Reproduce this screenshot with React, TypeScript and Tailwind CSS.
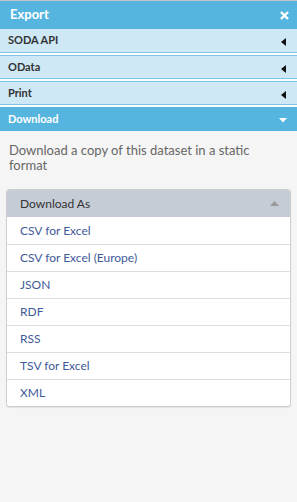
export default function App(): JSX.Element {
  const sections = ['SODA API', 'OData', 'Print'];
  const formats = ['CSV for Excel', 'CSV for Excel (Europe)', 'JSON', 'RDF', 'RSS', 'TSV for Excel', 'XML'];

  return (
    <div
      className="flex h-[502px] w-[297px] flex-col overflow-hidden border-t border-[#c4c4c4] bg-white"
      style={{ fontFamily: 'Lato, "Open Sans", sans-serif' }}
    >
      <div className="flex h-[28px] shrink-0 items-center justify-between bg-[#56b5df] pl-[10px] pr-[8px]">
        <span className="text-[13px] font-bold text-white">Export</span>
        <svg width="9" height="9" viewBox="0 0 9 9">
          <path d="M1 1 L8 8 M8 1 L1 8" stroke="white" strokeWidth="2.4" />
        </svg>
      </div>

      {sections.map((s, i) => (
        <div
          key={s}
          className={`mb-[2px] flex h-[24px] shrink-0 items-center justify-between border-b border-[#7cc3e5] bg-[#cee8f5] pl-[8px] pr-[11px] ${i > 0 ? 'border-t' : ''}`}
        >
          <span className="text-[11px] font-bold text-[#333]">{s}</span>
          <svg width="5" height="8" viewBox="0 0 5 8" className="mt-[3px]">
            <path d="M5 0 L0 4 L5 8 Z" fill="#111" />
          </svg>
        </div>
      ))}

      <div className="flex h-[24px] shrink-0 items-center justify-between bg-[#56b5df] pl-[8px] pr-[10px]">
        <span className="text-[11px] font-bold text-white">Download</span>
        <svg width="8" height="5" viewBox="0 0 8 5" className="mt-[2px]">
          <path d="M0 0 L8 0 L4 4.5 Z" fill="white" />
        </svg>
      </div>

      <div className="flex-1 bg-[#f5f5f5] px-[6px] pt-[12px]">
        <p className="px-[3px] text-[13px] leading-[15px] text-[#666]">
          Download a copy of this dataset in a static format
        </p>

        <div className="mt-[16px] overflow-hidden rounded-[3px] border border-[#cfcfcf] bg-white shadow-[0_1px_1px_rgba(0,0,0,0.08)]">
          <div className="flex h-[27px] items-center justify-between bg-[#c6ccd6] pl-[13px] pr-[11px]">
            <span className="text-[12px] text-[#333]">Download As</span>
            <svg width="9" height="5" viewBox="0 0 9 5">
              <path d="M0 5 L9 5 L4.5 0 Z" fill="#999" />
            </svg>
          </div>
          {formats.map((f, i) => (
            <div
              key={f}
              className={`flex h-[27px] items-center pl-[13px] text-[12px] text-[#3f5a99] ${i > 0 ? 'border-t border-[#dedede]' : ''}`}
            >
              {f}
            </div>
          ))}
        </div>
      </div>
    </div>
  );
}
